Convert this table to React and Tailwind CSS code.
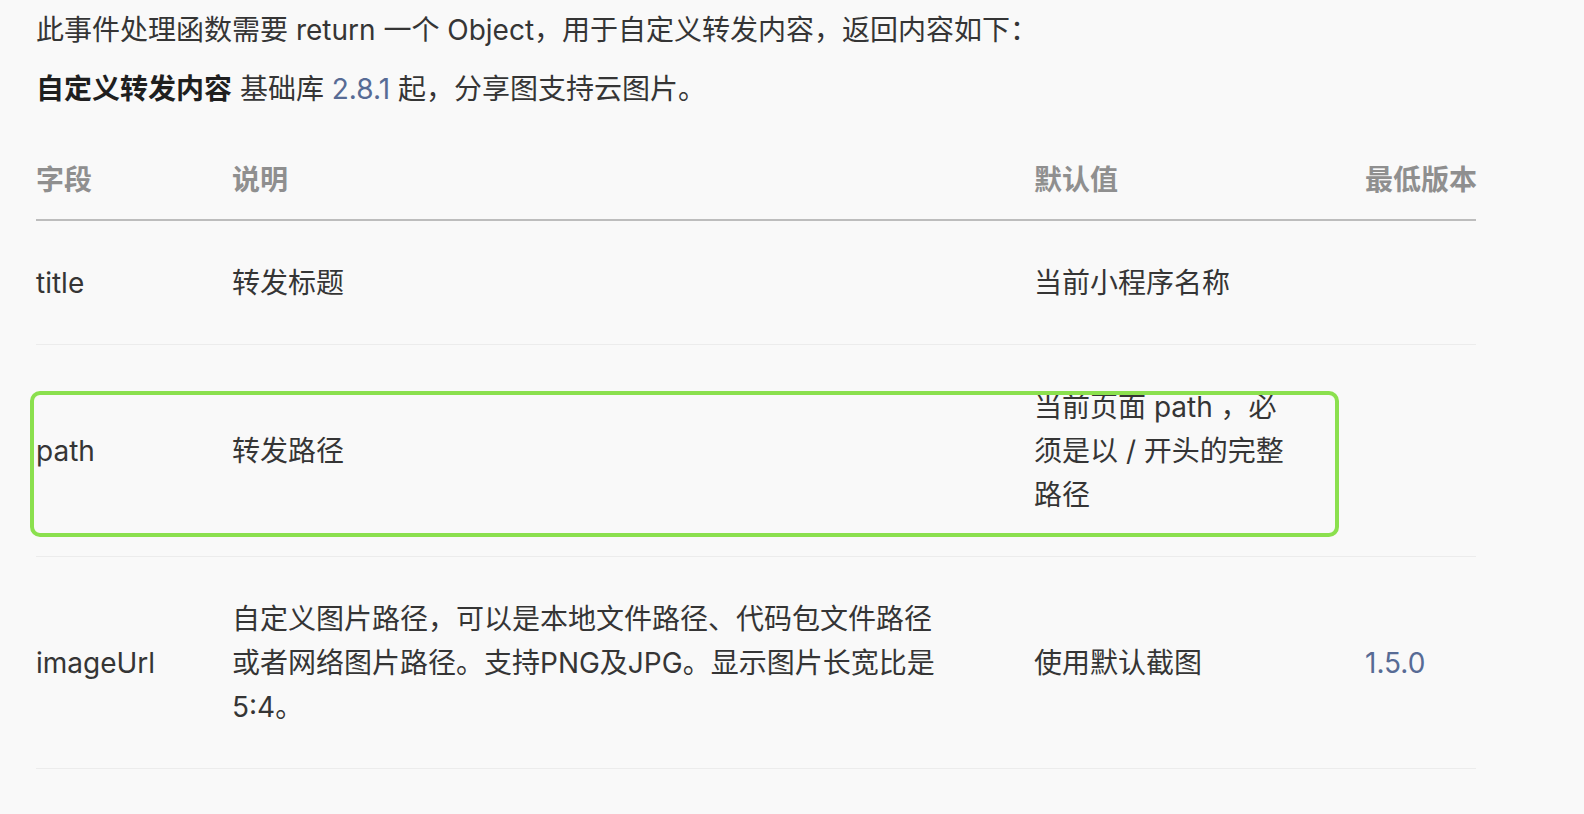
import React from "react";

const rows = [
  { field: "title", desc: "转发标题", def: "当前小程序名称", ver: "" },
  { field: "path", desc: "转发路径", def: "当前页面 path ，必须是以 / 开头的完整路径", ver: "" },
  {
    field: "imageUrl",
    desc: "自定义图片路径，可以是本地文件路径、代码包文件路径或者网络图片路径。支持PNG及JPG。显示图片长宽比是 5:4。",
    def: "使用默认截图",
    ver: "1.5.0",
  },
];

const App = () => {
  return (
    <div
      className="relative min-h-screen w-full bg-[#f9f9f9] text-[28px] leading-[44px] text-[#353535]"
      style={{ fontFamily: 'Inter, "Noto Sans CJK SC", sans-serif' }}
    >
      <div className="w-[1476px] pl-9 pt-[8px]">
        <p>此事件处理函数需要 return 一个 Object，用于自定义转发内容，返回内容如下：</p>
        <p className="mt-[15px]">
          <strong className="font-bold text-[#1f1f1f]">自定义转发内容</strong> 基础库{" "}
          <a className="text-[#576b95]">2.8.1</a> 起，分享图支持云图片。
        </p>

        <table className="mt-[15px] w-[1440px] table-fixed">
          <colgroup>
            <col className="w-[196px]" />
            <col className="w-[802px]" />
            <col className="w-[331px]" />
            <col className="w-[111px]" />
          </colgroup>
          <thead>
            <tr className="text-left font-semibold text-[#8f8f8f]">
              <th className="border-b-2 border-[#bdbdbd] pt-8 pb-[17px] font-semibold">字段</th>
              <th className="border-b-2 border-[#bdbdbd] pt-8 pb-[17px] font-semibold">说明</th>
              <th className="border-b-2 border-[#bdbdbd] pt-8 pb-[17px] font-semibold">默认值</th>
              <th className="whitespace-nowrap border-b-2 border-[#bdbdbd] pt-8 pb-[17px] font-semibold">最低版本</th>
            </tr>
          </thead>
          <tbody>
            {rows.map((row) => (
              <tr key={row.field}>
                <td className="border-b border-[#ececec] pt-10 pb-[39px] align-middle">{row.field}</td>
                <td className="border-b border-[#ececec] pt-10 pb-[39px] align-middle">
                  <div className="max-w-[716px]">{row.desc}</div>
                </td>
                <td className="border-b border-[#ececec] pt-10 pb-[39px] align-middle">
                  <div className="max-w-[260px]">{row.def}</div>
                </td>
                <td className="whitespace-nowrap border-b border-[#ececec] pt-10 pb-[39px] align-middle text-[#576b95]">
                  {row.ver}
                </td>
              </tr>
            ))}
          </tbody>
        </table>
      </div>

      {/* highlight annotation over the path row */}
      <div className="pointer-events-none absolute left-[30px] top-[391px] h-[146px] w-[1309px] rounded-[10px] border-4 border-[#8be04e]" />
    </div>
  );
};

export default App;
